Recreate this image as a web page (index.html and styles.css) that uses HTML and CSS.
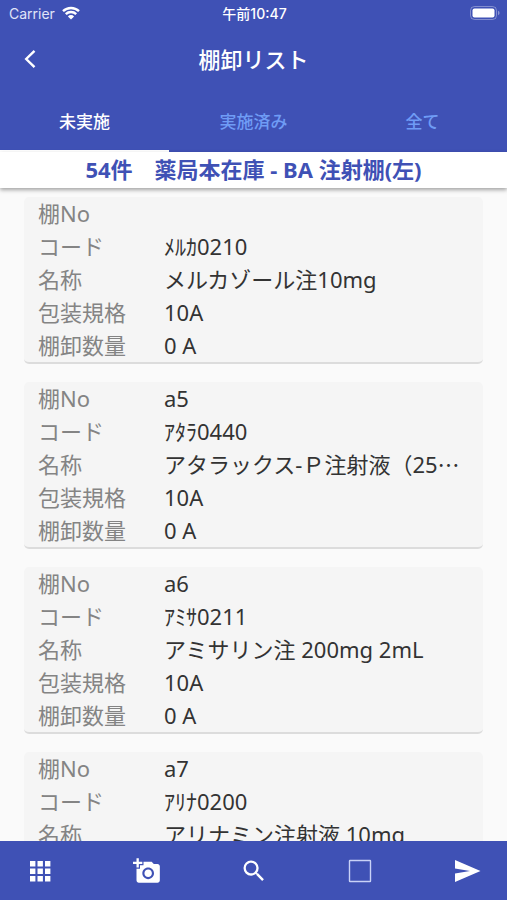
FILE: index.html
```html
<!DOCTYPE html>
<html lang="ja">
<head>
<meta charset="utf-8">
<meta name="viewport" content="width=device-width, initial-scale=1">
<title>棚卸リスト</title>
<link rel="stylesheet" href="styles.css">
</head>
<body>
<div class="screen">
  <header class="header">
    <div class="status">
      <span class="carrier">Carrier
        <svg class="wifi" viewBox="0 0 18 14" aria-hidden="true"><path d="M1 5.2a11.5 11.5 0 0 1 16 0M3.8 8.1a7.4 7.4 0 0 1 10.4 0" fill="none" stroke="currentColor" stroke-width="2.4"/><path d="M9 13.6 5.9 10.4a4.4 4.4 0 0 1 6.2 0z" fill="currentColor"/></svg>
      </span>
      <time class="clock">午前10:47</time>
      <svg class="battery" viewBox="0 0 30 14" aria-hidden="true"><rect x=".5" y=".5" width="26" height="13" rx="4" fill="none" stroke="#fff" stroke-opacity=".35"/><rect x="2.5" y="2.500" width="22" height="9" rx="2" fill="#fff"/><path d="M28 4.800v4.400q1.600-.6 1.600-2.200T28 4.800z" fill="#fff" fill-opacity=".4"/></svg>
    </div>
    <div class="appbar">
      <button class="back" type="button" aria-label="戻る"><svg viewBox="0 0 12 20" aria-hidden="true"><path d="M10.500 1.800 2.200 10l8.300 8.200" fill="none" stroke="currentColor" stroke-width="2.400"/></svg></button>
      <h1 class="title">棚卸リスト</h1>
    </div>
    <nav class="tabs">
      <a class="tab active" href="#todo">未実施</a>
      <a class="tab" href="#done">実施済み</a>
      <a class="tab" href="#all">全て</a>
    </nav>
  </header>
  <h2 class="banner">54件　薬局本在庫 - BA 注射棚(左)</h2>
  <main class="list">
    <dl class="card">
      <dt>棚No</dt><dd></dd>
      <dt>コード</dt><dd>ﾒﾙｶ0210</dd>
      <dt>名称</dt><dd>メルカゾール注10mg</dd>
      <dt>包装規格</dt><dd>10A</dd>
      <dt>棚卸数量</dt><dd>0 A</dd>
    </dl>
    <dl class="card">
      <dt>棚No</dt><dd>a5</dd>
      <dt>コード</dt><dd>ｱﾀﾗ0440</dd>
      <dt>名称</dt><dd>アタラックス-Ｐ注射液（25⋯</dd>
      <dt>包装規格</dt><dd>10A</dd>
      <dt>棚卸数量</dt><dd>0 A</dd>
    </dl>
    <dl class="card">
      <dt>棚No</dt><dd>a6</dd>
      <dt>コード</dt><dd>ｱﾐｻ0211</dd>
      <dt>名称</dt><dd>アミサリン注 200mg 2mL</dd>
      <dt>包装規格</dt><dd>10A</dd>
      <dt>棚卸数量</dt><dd>0 A</dd>
    </dl>
    <dl class="card">
      <dt>棚No</dt><dd>a7</dd>
      <dt>コード</dt><dd>ｱﾘﾅ0200</dd>
      <dt>名称</dt><dd>アリナミン注射液 10mg</dd>
    </dl>
  </main>
  <footer class="toolbar">
    <button class="tool" type="button" aria-label="一覧"><svg viewBox="0 0 28 28" aria-hidden="true"><path d="M4 4h5.400v5.400H4zM11.500 4h5.400v5.400h-5.400zM19 4h5.400v5.400H19zM4 11.500h5.400v5.400H4zM11.500 11.500h5.400v5.400h-5.400zM19 11.500h5.400v5.400H19zM4 19h5.400v5.400H4zM11.500 19h5.400v5.400h-5.400zM19 19h5.400v5.400H19z" fill="currentColor"/></svg></button>
    <button class="tool" type="button" aria-label="写真を追加"><svg viewBox="0 0 24 24" aria-hidden="true"><path d="M3 4V1h2v3h3v2H5v3H3V6H0V4h3zm3 6V7h3V4h7l1.830 2H21c1.100 0 2 .9 2 2v12c0 1.100-.9 2-2 2H5c-1.100 0-2-.9-2-2V10h3zm7 9c2.760 0 5-2.240 5-5s-2.240-5-5-5-5 2.240-5 5 2.240 5 5 5zm-3.200-5c0 1.770 1.430 3.200 3.200 3.200s3.200-1.430 3.200-3.200-1.430-3.200-3.200-3.200-3.200 1.430-3.200 3.200z" fill="currentColor"/></svg></button>
    <button class="tool" type="button" aria-label="検索"><svg viewBox="0 0 24 24" aria-hidden="true"><path d="M15.500 14h-.79l-.28-.27A6.471 6.471 0 0 0 16 9.500 6.500 6.500 0 1 0 9.500 16c1.610 0 3.090-.59 4.230-1.570l.27.28v.79l5 4.990L20.490 19l-4.990-5zm-6 0C7.010 14 5 11.990 5 9.500S7.010 5 9.500 5 14 7.010 14 9.500 11.990 14 9.500 14z" fill="currentColor"/></svg></button>
    <button class="tool" type="button" aria-label="選択"><svg viewBox="0 0 28 28" aria-hidden="true"><rect x="3.500" y="3.500" width="21" height="21" rx=".5" fill="none" stroke="#c9d2f7" stroke-width="1.400"/></svg></button>
    <button class="tool" type="button" aria-label="送信"><svg viewBox="0 0 28 28" aria-hidden="true"><path d="M2 3 27.500 14 2 25v-8.500L17 14 2 11.500z" fill="currentColor"/></svg></button>
  </footer>
</div>
</body>
</html>
```
FILE: styles.css
```css
* { box-sizing: border-box; }

body {
  margin: 0;
  background: #fafafa;
  color: #333;
  font-family: "Noto Sans", "Noto Sans CJK JP", sans-serif;
}

button {
  padding: 0;
  border: 0;
  background: none;
  color: inherit;
}

.screen {
  display: flex;
  flex-direction: column;
  height: 100vh;
  overflow: hidden;
}

.header {
  flex: none;
  background: #3f51b5;
  color: #fff;
}

.status {
  display: grid;
  grid-template-columns: 1fr auto 1fr;
  align-items: center;
  height: 26px;
  padding: 0 7px 0 9px;
  font-family: Inter, "Noto Sans CJK JP", sans-serif;
  font-size: 14px;
}

.carrier {
  display: flex;
  align-items: center;
  gap: 7px;
  color: #e0e4f8;
}

.wifi { width: 18px; height: 14px; color: #fff; }
.clock { font-size: 14px; font-weight: 500; }
.battery { width: 30px; height: 14px; justify-self: end; }

.appbar {
  display: grid;
  grid-template-columns: 60px 1fr 60px;
  align-items: center;
  height: 66px;
}

.back {
  display: grid;
  place-items: center;
  height: 48px;
}

.back svg { width: 12px; height: 20px; }

.title {
  margin: 0;
  font-size: 22px;
  line-height: 32px;
  font-weight: 500;
  text-align: center;
}

.tabs {
  display: grid;
  grid-template-columns: repeat(3, 1fr);
}

.tab {
  height: 60px;
  border-bottom: 2px solid transparent;
  color: #6f9cf5;
  font-size: 17px;
  line-height: 60px;
  font-weight: 500;
  text-align: center;
  text-decoration: none;
}

.tab.active { border-color: #fff; color: #fff; }

.banner {
  z-index: 1;
  flex: none;
  height: 36px;
  margin: 0;
  background: #fff;
  box-shadow: 0 2px 4px rgba(0, 0, 0, .35);
  color: #3f51b5;
  font-size: 22px;
  line-height: 34px;
  font-weight: 700;
  text-align: center;
  white-space: nowrap;
}

.list {
  display: flex;
  flex: 1;
  flex-direction: column;
  gap: 18px;
  min-height: 0;
  padding: 9px 24px 0;
  overflow: hidden;
}

.card {
  display: grid;
  flex: none;
  grid-template-columns: 126px minmax(0, 1fr);
  grid-auto-rows: 33px;
  margin: 0;
  padding: 0 14px;
  border-bottom: 2px solid #dcdcdc;
  border-radius: 5px;
  background: #f5f5f5;
  font-size: 22px;
  line-height: 32px;
  font-weight: 400;
}

.card dt { color: #848484; }

.card dd {
  margin: 0;
  overflow: hidden;
  text-overflow: ellipsis;
  white-space: nowrap;
}

.toolbar {
  display: flex;
  flex: none;
  align-items: center;
  justify-content: space-between;
  height: 59px;
  padding: 0 16px;
  background: #3f51b5;
  color: #fff;
}

.tool {
  display: grid;
  place-items: center;
  width: 48px;
  height: 48px;
}

.tool svg { width: 28px; height: 28px; }
```
